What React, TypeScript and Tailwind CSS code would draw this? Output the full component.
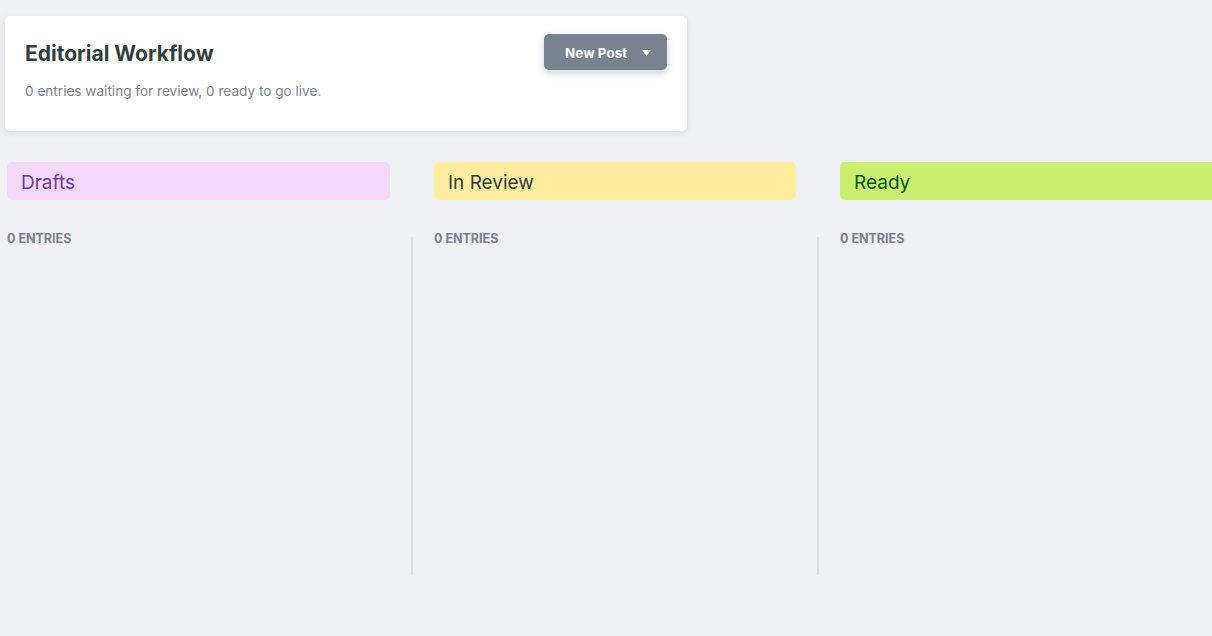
import React from 'react';

interface Column {
  label: string;
  headerClass: string;
  width: string;
}

const columns: Column[] = [
  { label: 'Drafts', headerClass: 'bg-[#f6d8fd] text-[#70399f]', width: 'w-[383px]' },
  { label: 'In Review', headerClass: 'bg-[#ffee9e] text-[#313d3e]', width: 'w-[362px]' },
  { label: 'Ready', headerClass: 'bg-[#caef6f] text-[#005614]', width: 'w-[400px]' },
];

function Divider() {
  return <div className="w-[2px] h-[338px] mt-[75px] mx-[21px] bg-[#dfdfe3] shrink-0" />;
}

function WorkflowColumn({ col }: { col: Column }) {
  return (
    <div className={`${col.width} shrink-0`}>
      <div className={`h-[38px] rounded-[5px] flex items-center px-[14px] pt-[4px] text-[19px] ${col.headerClass}`}>
        {col.label}
      </div>
      <div className="mt-[31px] text-[12.5px] font-bold uppercase text-[#798291] leading-[16px]">
        0 entries
      </div>
    </div>
  );
}

export default function App() {
  return (
    <div
      className="w-[1212px] h-[636px] bg-[#eff0f4] overflow-hidden"
      style={{ fontFamily: 'Inter, "Noto Sans", sans-serif' }}
    >
      <div className="pt-[16px] pl-[5px]">
        <div className="w-[682px] h-[115px] bg-white rounded-[5px] shadow-[0_2px_6px_rgba(68,74,87,0.12)] flex justify-between pl-[20px] pr-[20px] pt-[18px]">
          <div>
            <h1 className="text-[21px] font-bold text-[#313d3e] leading-[40px]">Editorial Workflow</h1>
            <p className="mt-[8px] text-[13.6px] text-[#798291] leading-[18px]">
              0 entries waiting for review, 0 ready to go live.
            </p>
          </div>
          <button
            type="button"
            className="h-[36px] w-[123px] bg-[#798291] text-white rounded-[5px] text-[13.5px] font-bold flex items-center pl-[21px] pt-[2px] shadow-[0_3px_8px_rgba(68,74,87,0.25)]"
          >
            New Post
            <svg className="ml-[15px] mb-[1px]" width="9" height="6" viewBox="0 0 9 6">
              <path d="M0 0 L9 0 L4.5 6 Z" fill="white" />
            </svg>
          </button>
        </div>
      </div>
      <div className="flex mt-[31px] pl-[7px]">
        <WorkflowColumn col={columns[0]} />
        <Divider />
        <WorkflowColumn col={columns[1]} />
        <Divider />
        <WorkflowColumn col={columns[2]} />
      </div>
    </div>
  );
}
